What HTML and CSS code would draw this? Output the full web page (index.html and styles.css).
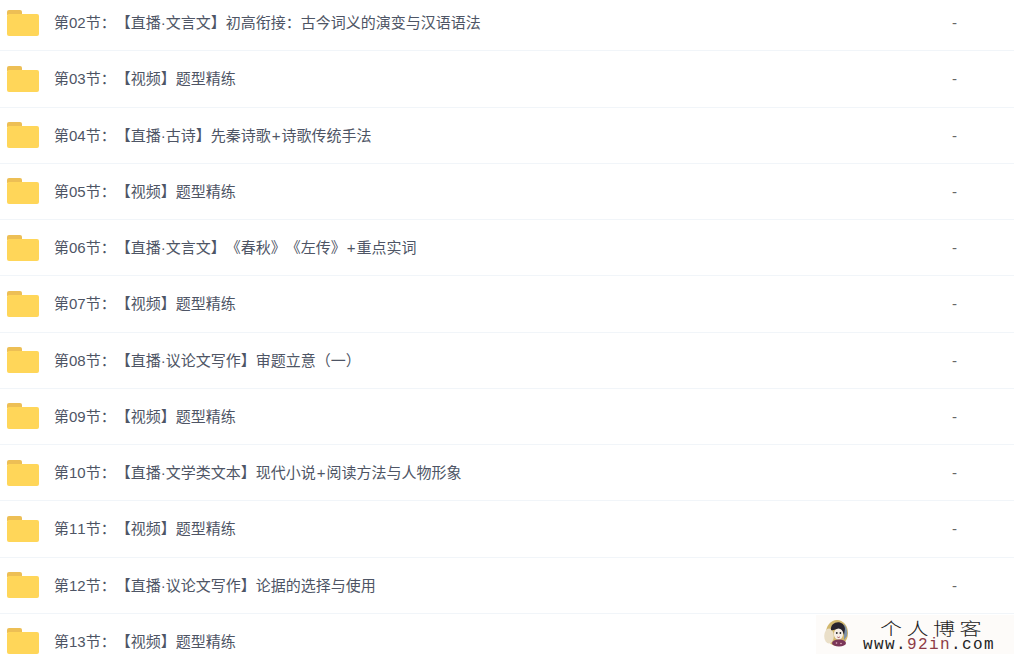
FILE: index.html
```html
<!DOCTYPE html>
<html>
<head>
<meta charset="UTF-8">
<title>课程目录</title>
<link rel="stylesheet" href="styles.css">
</head>
<body>
<ul class="fileList">
	<li class="fileRow"><svg class="folder" viewBox="0 0 32 26"><path class="tab" d="M0 2a2 2 0 0 1 2-2h11a2 2 0 0 1 2 2v3H0z"/><path class="body" d="M0 6a2 2 0 0 1 2-2h13v0h15a2 2 0 0 1 2 2v18a2 2 0 0 1-2 2H2a2 2 0 0 1-2-2z"/></svg><span class="name">第02节：【直播·文言文】初高衔接：古今词义的演变与汉语语法</span><span class="size">-</span></li>
	<li class="fileRow"><svg class="folder" viewBox="0 0 32 26"><path class="tab" d="M0 2a2 2 0 0 1 2-2h11a2 2 0 0 1 2 2v3H0z"/><path class="body" d="M0 6a2 2 0 0 1 2-2h13v0h15a2 2 0 0 1 2 2v18a2 2 0 0 1-2 2H2a2 2 0 0 1-2-2z"/></svg><span class="name">第03节：【视频】题型精练</span><span class="size">-</span></li>
	<li class="fileRow"><svg class="folder" viewBox="0 0 32 26"><path class="tab" d="M0 2a2 2 0 0 1 2-2h11a2 2 0 0 1 2 2v3H0z"/><path class="body" d="M0 6a2 2 0 0 1 2-2h13v0h15a2 2 0 0 1 2 2v18a2 2 0 0 1-2 2H2a2 2 0 0 1-2-2z"/></svg><span class="name">第04节：【直播·古诗】先秦诗歌<span class="plus">+</span>诗歌传统手法</span><span class="size">-</span></li>
	<li class="fileRow"><svg class="folder" viewBox="0 0 32 26"><path class="tab" d="M0 2a2 2 0 0 1 2-2h11a2 2 0 0 1 2 2v3H0z"/><path class="body" d="M0 6a2 2 0 0 1 2-2h13v0h15a2 2 0 0 1 2 2v18a2 2 0 0 1-2 2H2a2 2 0 0 1-2-2z"/></svg><span class="name">第05节：【视频】题型精练</span><span class="size">-</span></li>
	<li class="fileRow"><svg class="folder" viewBox="0 0 32 26"><path class="tab" d="M0 2a2 2 0 0 1 2-2h11a2 2 0 0 1 2 2v3H0z"/><path class="body" d="M0 6a2 2 0 0 1 2-2h13v0h15a2 2 0 0 1 2 2v18a2 2 0 0 1-2 2H2a2 2 0 0 1-2-2z"/></svg><span class="name">第06节：【直播·文言文】《春秋》《左传》<span class="plus">+</span>重点实词</span><span class="size">-</span></li>
	<li class="fileRow"><svg class="folder" viewBox="0 0 32 26"><path class="tab" d="M0 2a2 2 0 0 1 2-2h11a2 2 0 0 1 2 2v3H0z"/><path class="body" d="M0 6a2 2 0 0 1 2-2h13v0h15a2 2 0 0 1 2 2v18a2 2 0 0 1-2 2H2a2 2 0 0 1-2-2z"/></svg><span class="name">第07节：【视频】题型精练</span><span class="size">-</span></li>
	<li class="fileRow"><svg class="folder" viewBox="0 0 32 26"><path class="tab" d="M0 2a2 2 0 0 1 2-2h11a2 2 0 0 1 2 2v3H0z"/><path class="body" d="M0 6a2 2 0 0 1 2-2h13v0h15a2 2 0 0 1 2 2v18a2 2 0 0 1-2 2H2a2 2 0 0 1-2-2z"/></svg><span class="name">第08节：【直播·议论文写作】审题立意（一）</span><span class="size">-</span></li>
	<li class="fileRow"><svg class="folder" viewBox="0 0 32 26"><path class="tab" d="M0 2a2 2 0 0 1 2-2h11a2 2 0 0 1 2 2v3H0z"/><path class="body" d="M0 6a2 2 0 0 1 2-2h13v0h15a2 2 0 0 1 2 2v18a2 2 0 0 1-2 2H2a2 2 0 0 1-2-2z"/></svg><span class="name">第09节：【视频】题型精练</span><span class="size">-</span></li>
	<li class="fileRow"><svg class="folder" viewBox="0 0 32 26"><path class="tab" d="M0 2a2 2 0 0 1 2-2h11a2 2 0 0 1 2 2v3H0z"/><path class="body" d="M0 6a2 2 0 0 1 2-2h13v0h15a2 2 0 0 1 2 2v18a2 2 0 0 1-2 2H2a2 2 0 0 1-2-2z"/></svg><span class="name">第10节：【直播·文学类文本】现代小说<span class="plus">+</span>阅读方法与人物形象</span><span class="size">-</span></li>
	<li class="fileRow"><svg class="folder" viewBox="0 0 32 26"><path class="tab" d="M0 2a2 2 0 0 1 2-2h11a2 2 0 0 1 2 2v3H0z"/><path class="body" d="M0 6a2 2 0 0 1 2-2h13v0h15a2 2 0 0 1 2 2v18a2 2 0 0 1-2 2H2a2 2 0 0 1-2-2z"/></svg><span class="name">第11节：【视频】题型精练</span><span class="size">-</span></li>
	<li class="fileRow"><svg class="folder" viewBox="0 0 32 26"><path class="tab" d="M0 2a2 2 0 0 1 2-2h11a2 2 0 0 1 2 2v3H0z"/><path class="body" d="M0 6a2 2 0 0 1 2-2h13v0h15a2 2 0 0 1 2 2v18a2 2 0 0 1-2 2H2a2 2 0 0 1-2-2z"/></svg><span class="name">第12节：【直播·议论文写作】论据的选择与使用</span><span class="size">-</span></li>
	<li class="fileRow"><svg class="folder" viewBox="0 0 32 26"><path class="tab" d="M0 2a2 2 0 0 1 2-2h11a2 2 0 0 1 2 2v3H0z"/><path class="body" d="M0 6a2 2 0 0 1 2-2h13v0h15a2 2 0 0 1 2 2v18a2 2 0 0 1-2 2H2a2 2 0 0 1-2-2z"/></svg><span class="name">第13节：【视频】题型精练</span></li>
</ul>

<div class="stamp">
	<svg class="face" viewBox="0 0 26 30">
		<ellipse cx="13" cy="14" rx="11" ry="13" fill="#d2b86e"/>
		<path d="M20 5q4 5 3 12l-3 4z" fill="#7f93a8"/>
		<ellipse cx="5" cy="17" rx="4.8" ry="7.5" fill="#eadfc8"/>
		<path d="M7 11C6 2 20 0 21 10l-1 6c-1-4-3-6-6-6s-5 2-7 1z" fill="#28242e"/>
		<ellipse cx="14.5" cy="15" rx="4.6" ry="5.5" fill="#f5eee6"/>
		<circle cx="12.8" cy="14" r="0.9" fill="#222"/>
		<circle cx="16.4" cy="14" r="0.9" fill="#222"/>
		<path d="M13.4 18q1.2 1 2.4 0" stroke="#8a2b35" stroke-width="0.8" fill="none"/>
		<ellipse cx="15" cy="24" rx="7" ry="3.6" fill="#7a3658"/>
		<circle cx="12.5" cy="24" r="0.8" fill="#e7b9c4"/>
		<circle cx="17" cy="24.5" r="0.8" fill="#e7b9c4"/>
	</svg>
	<div class="stampText">
		<div class="stampTitle">个人博客</div>
		<div class="stampUrl">www.<span class="red">92in</span>.com</div>
	</div>
</div>
</body>
</html>
```

FILE: styles.css
```css
* {
	margin: 0;
	padding: 0;
}

html, body {
	height: 657px;
	overflow: hidden;
}

body {
	background: #fff;
	font-family: "Liberation Sans", "Noto Sans CJK SC", sans-serif;
	font-size: 15px;
	color: #4e5565;
	font-kerning: none;
	text-spacing-trim: space-all;
}

.fileList {
	list-style: none;
	margin-top: -5px;
}

.fileRow {
	display: flex;
	align-items: center;
	box-sizing: border-box;
	height: 56.25px;
	padding-left: 7px;
	border-bottom: 1px solid #f1f5f9;
}

.folder {
	width: 32px;
	height: 26px;
	flex: none;
	margin-right: 15px;
}

.tab {
	fill: #edbf55;
}

.body {
	fill: #ffd659;
}

.name {
	flex: 1;
	white-space: nowrap;
	margin-bottom: 2px;
}

.plus {
	padding: 0 1px;
}

.size {
	width: 62px;
	color: #666;
}

.stamp {
	position: absolute;
	left: 816px;
	top: 615px;
	width: 198px;
	height: 39px;
	box-sizing: border-box;
	padding-top: 4px;
	display: flex;
	background: #fdfbf9;
}

.face {
	width: 26px;
	height: 30px;
	margin-left: 8px;
	flex: none;
}

.stampText {
	margin-left: 13px;
	color: #222;
}

.stampTitle {
	font-family: "Noto Sans CJK SC", sans-serif;
	font-size: 17px;
	font-weight: 300;
	line-height: 17px;
	letter-spacing: 3.4px;
	margin-left: 17px;
	transform: scaleX(1.3);
	transform-origin: left;
}

.stampUrl {
	font-family: "Liberation Mono", monospace;
	font-size: 16px;
	line-height: 18px;
	letter-spacing: 1.4px;
}

.red {
	color: #8d3b45;
}
```
